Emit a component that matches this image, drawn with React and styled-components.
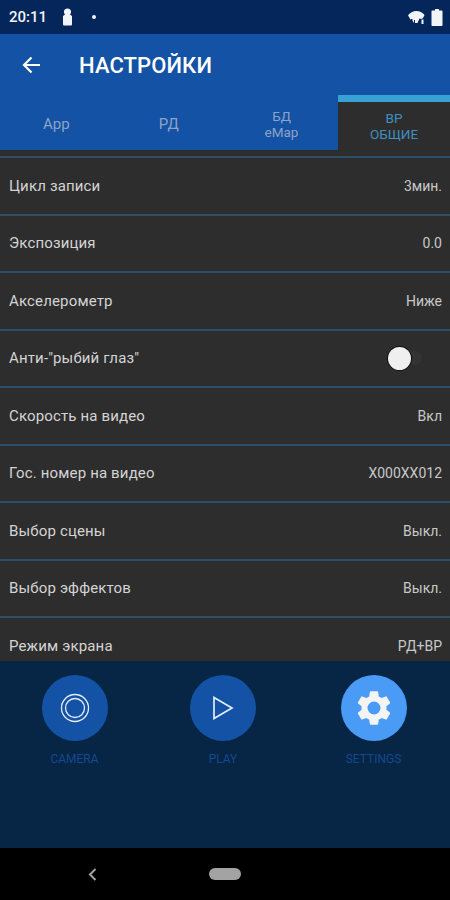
import React from "react";
import styled, { createGlobalStyle } from "styled-components";

const Global = createGlobalStyle`
  html, body { margin: 0; padding: 0; background: #000; }
  body { font-family: Roboto, "Liberation Sans", sans-serif; }
`;

const Screen = styled.div`
  width: 450px; height: 900px; display: flex; flex-direction: column; overflow: hidden; background: #2d2d2d;
`;
const StatusBar = styled.div`
  height: 34px; flex: none; background: #04265a; display: flex; align-items: center; padding: 0 7px 0 9px;
  color: #f2f4f8; box-sizing: border-box;
`;
const Time = styled.span`font-size: 15px; font-weight: 500; width: 52px;`;
const Dot = styled.span`width: 4px; height: 4px; border-radius: 50%; background: #f2f4f8; margin-left: 18px;`;
const Spacer = styled.div`flex: 1;`;
const StatusIcons = styled.div`display: flex; align-items: center; gap: 6px;`;
const Toolbar = styled.div`
  height: 61px; flex: none; background: #1352a5; display: flex; align-items: center; padding-left: 22px; color: #fff;
`;
const Title = styled.h1`
  margin: 2px 0 0 39px; font-size: 22px; font-weight: 500; letter-spacing: 0.1px; line-height: 1;
`;
const Tabs = styled.div`
  height: 55px; flex: none; background: #1352a5; display: grid; grid-template-columns: 112.5px 112.5px 113px 112px;
`;
const Tab = styled.div`
  display: flex; align-items: center; justify-content: center; text-align: center; box-sizing: border-box;
  font-size: ${p => (p.$large ? "15px" : "13.5px")}; line-height: 16px; font-weight: 400;
  color: ${p => (p.$active ? "#3f8fc4" : "#8ea3c6")};
  background: ${p => (p.$active ? "#2d2d2d" : "transparent")};
  border-top: ${p => (p.$active ? "7px solid #36a2d6" : "0")};
  padding-top: ${p => (p.$active ? "0" : "2px")};
`;
const List = styled.div`
  height: 511px; flex: none; overflow: hidden; box-sizing: border-box; padding-top: 6px; background: #2d2d2d;
`;
const Row = styled.div`
  height: 57.5px; box-sizing: border-box; border-top: 2px solid #2f4f69; display: flex; align-items: center;
  justify-content: space-between; padding: 0 8px 0 9px; color: #d4d4d4;
`;
const Label = styled.span`font-size: 15px; letter-spacing: 0.15px;`;
const Value = styled.span`font-size: 14px; color: #c8c8c8;`;
const Switch = styled.div`
  position: relative; width: 26px; height: 14px; border-radius: 7px; background: #333; margin-right: 20px;
`;
const Knob = styled.div`
  position: absolute; left: -8px; top: -4px; width: 23px; height: 23px; border-radius: 50%;
  background: #efefef; box-shadow: 0 0 0 1px #111;
`;
const BottomNav = styled.div`
  height: 187px; flex: none; background: #072545; display: grid; grid-template-columns: 149px 148px 153px; padding-top: 14px; box-sizing: border-box;
`;
const NavItem = styled.div`
  display: flex; flex-direction: column; align-items: center;
`;
const NavCircle = styled.div`
  width: 66px; height: 66px; border-radius: 50%; display: flex; align-items: center; justify-content: center;
  background: ${p => (p.$active ? "#4a9bf6" : "#1352a5")};
`;
const NavLabel = styled.span`
  margin-top: 11px; font-size: 12px; line-height: 14px; color: #124a90;
`;
const SystemBar = styled.div`
  height: 52px; flex: none; background: #000; display: grid; grid-template-columns: 209px 32px 1fr; align-items: center;
`;
const BackWrap = styled.div`display: flex; justify-content: flex-end; padding-right: 112px;`;
const Pill = styled.div`width: 32px; height: 12px; border-radius: 6px; background: #a3a3a3;`;

const rows = [
  ["Цикл записи", "3мин."],
  ["Экспозиция", "0.0"],
  ["Акселерометр", "Ниже"],
  ["Анти-\"рыбий глаз\"", null],
  ["Скорость на видео", "Вкл"],
  ["Гос. номер на видео", "X000XX012"],
  ["Выбор сцены", "Выкл."],
  ["Выбор эффектов", "Выкл."],
  ["Режим экрана", "РД+ВР"],
];

const KeyIcon = () => (
  <svg width="13" height="18" viewBox="0 0 13 18" fill="#f2f4f8">
    <path d="M6.500 0.500c2.200 0 3.600 1.400 3.600 3.300 0 1.100-.4 2-1.100 2.600l2 1.600v8c0 1-.5 1.500-1.400 1.500H3.400C2.500 17.500 2 17 2 16V8l2-1.600C3.300 5.800 2.900 4.900 2.900 3.800 2.900 1.900 4.300 .5 6.500 .5z" />
  </svg>
);
const SignalIcon = () => (
  <svg width="17" height="15" viewBox="0 0 17 15" fill="#f2f4f8">
    <path d="M0 5.500C2 2.500 5 1 8.500 1 11.500 1 14.500 2.500 16.500 5L15 8l-1.500 1-2-.5L9.500 13H6L4.500 11 2.500 9.500z" />
    <path d="M3 9h1.500v5H3zM6 10h1v4H6z" fill="#04265a" />
    <path d="M13.500 9.500h2V14h-2z" />
  </svg>
);
const BatteryIcon = () => (
  <svg width="12" height="17" viewBox="0 0 12 17" fill="#f2f4f8">
    <path d="M4 0h4v1.500h2.500c.6 0 1 .4 1 1V16c0 .6-.4 1-1 1h-9c-.6 0-1-.4-1-1V2.500c0-.6.4-1 1-1H4z" />
  </svg>
);
const BackArrow = () => (
  <svg width="18" height="18" viewBox="0 0 18 18" fill="none" stroke="#fff" strokeWidth="2.200">
    <path d="M18 9H2M9.500 1.500L2 9l7.500 7.500" />
  </svg>
);
const CameraIcon = () => (
  <svg width="30" height="30" viewBox="0 0 30 30" fill="none" stroke="#e6eef9" strokeWidth="1.300">
    <circle cx="15" cy="15" r="13.500" />
    <circle cx="15" cy="15" r="9.500" />
  </svg>
);
const PlayIcon = () => (
  <svg width="22" height="24" viewBox="0 0 22 24" fill="none" stroke="#e6eef9" strokeWidth="1.700">
    <path d="M2 1.500v21L20 12z" />
  </svg>
);
const GearIcon = () => (
  <svg width="40" height="40" viewBox="0 0 24 24" fill="#f4f4f4">
    <path fillRule="evenodd" d="M19.430 12.980c.04-.32.07-.64.07-.98s-.03-.66-.07-.98l2.110-1.650c.19-.15.24-.42.12-.64l-2-3.460c-.12-.22-.39-.3-.61-.22l-2.490 1c-.52-.4-1.080-.73-1.690-.98l-.38-2.650A.49.49 0 0 0 14 2h-4c-.25 0-.46.18-.49.420l-.38 2.650c-.61.25-1.170.59-1.690.98l-2.490-1c-.23-.09-.49 0-.61.220l-2 3.460c-.13.220-.07.490.12.640l2.110 1.650c-.04.320-.07.650-.07.980s.03.660.07.980l-2.110 1.650c-.19.150-.24.420-.12.640l2 3.460c.12.220.39.300.61.220l2.490-1c.52.400 1.080.730 1.690.980l.38 2.650c.03.240.24.420.49.420h4c.25 0 .46-.18.49-.42l.38-2.650c.61-.25 1.170-.59 1.690-.98l2.490 1c.23.090.49 0 .61-.22l2-3.460c.12-.22.07-.49-.12-.64l-2.110-1.650zM12 15.900a3.900 3.900 0 1 1 0-7.800 3.900 3.900 0 0 1 0 7.800z" />
  </svg>
);
const SysBack = () => (
  <svg width="9" height="13" viewBox="0 0 9 13" fill="none" stroke="#a3a3a3" strokeWidth="2">
    <path d="M7.500 1L2 6.500 7.500 12" />
  </svg>
);

export default function App() {
  return (
    <Screen>
      <Global />
      <StatusBar>
        <Time>20:11</Time>
        <KeyIcon />
        <Dot />
        <Spacer />
        <StatusIcons>
          <SignalIcon />
          <BatteryIcon />
        </StatusIcons>
      </StatusBar>
      <Toolbar>
        <BackArrow />
        <Title>НАСТРОЙКИ</Title>
      </Toolbar>
      <Tabs>
        <Tab $large>App</Tab>
        <Tab $large>РД</Tab>
        <Tab>БД<br />eMap</Tab>
        <Tab $active>ВР<br />ОБЩИЕ</Tab>
      </Tabs>
      <List>
        {rows.map(([label, value]) => (
          <Row key={label}>
            <Label>{label}</Label>
            {value ? <Value>{value}</Value> : <Switch><Knob /></Switch>}
          </Row>
        ))}
      </List>
      <BottomNav>
        <NavItem>
          <NavCircle><CameraIcon /></NavCircle>
          <NavLabel>CAMERA</NavLabel>
        </NavItem>
        <NavItem>
          <NavCircle><PlayIcon /></NavCircle>
          <NavLabel>PLAY</NavLabel>
        </NavItem>
        <NavItem>
          <NavCircle $active><GearIcon /></NavCircle>
          <NavLabel>SETTINGS</NavLabel>
        </NavItem>
      </BottomNav>
      <SystemBar>
        <BackWrap><SysBack /></BackWrap>
        <Pill />
      </SystemBar>
    </Screen>
  );
}
